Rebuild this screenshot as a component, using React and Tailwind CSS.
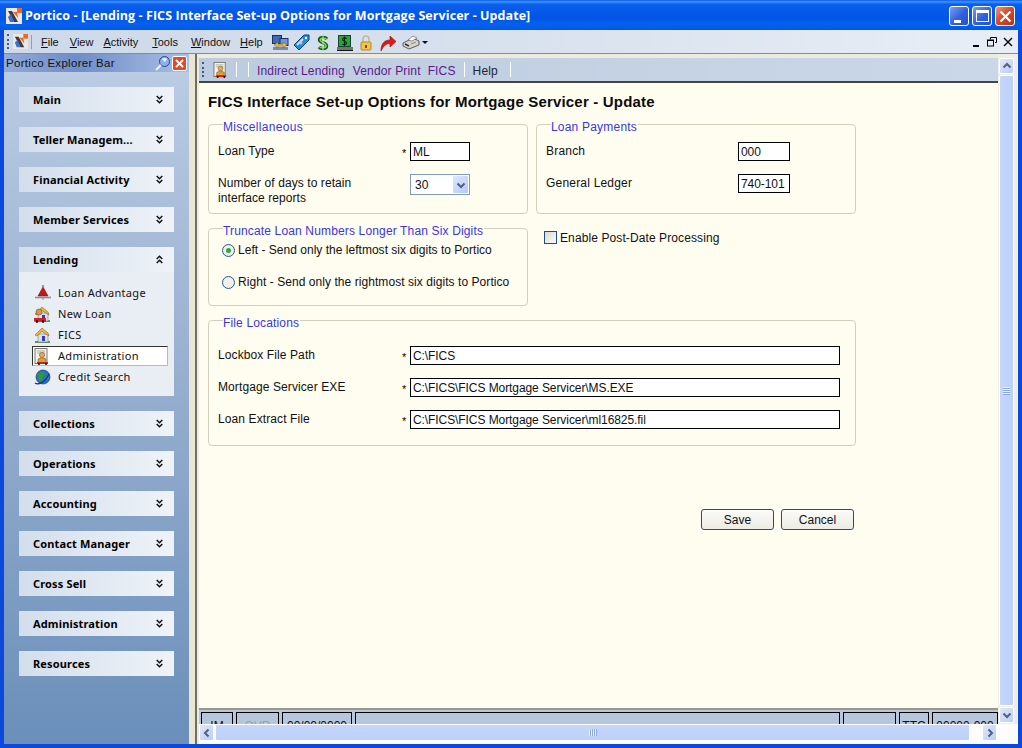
import React from "react";

const SANS = "font-['Liberation_Sans',Arial,sans-serif]";

function Chev({ up }) {
  return (
    <svg width="7" height="9" viewBox="0 0 7 9" fill="none" stroke="#111" strokeWidth="1.5" className="shrink-0 mr-[1px]">
      {up ? (
        <>
          <path d="M.7 4 L3.5 1.2 L6.3 4" />
          <path d="M.7 8 L3.5 5.2 L6.3 8" />
        </>
      ) : (
        <>
          <path d="M.7 1 L3.5 3.8 L6.3 1" />
          <path d="M.7 5 L3.5 7.8 L6.3 5" />
        </>
      )}
    </svg>
  );
}

function Logo({ s = 16 }) {
  return (
    <svg width={s} height={s} viewBox="0 0 16 16" className="shrink-0">
      <rect width="16" height="16" fill="#ece8e0" />
      <path d="M11 0h5v5h-5z" fill="#ee6a1f" />
      <path d="M2 3 L6 3 L12 14 L8 14 Z" fill="#3a3a48" />
      <path d="M2 9 L5 6 L8 14 L4 14 Z" fill="#3f6fc8" />
      <path d="M7 4 L11 4 L12 10 Z" fill="#e2682a" />
    </svg>
  );
}

function PcIcon() {
  return (
    <svg width="17" height="16" viewBox="0 0 17 16" className="shrink-0">
      <rect x="0.5" y="0.5" width="9" height="8" fill="#3e68b8" stroke="#1c2f66" />
      <rect x="8" y="3.5" width="8" height="7" fill="#6f97d8" stroke="#1c2f66" />
      <path d="M1 12h15v3H1z" fill="#7b8aa8" />
      <path d="M2 10 L6 7 L6 9 L11 9 L11 7 L15 10 L11 13 L11 11 L6 11 L6 13 Z" fill="#e8b83c" stroke="#7a5a10" strokeWidth=".5" />
    </svg>
  );
}
function TagIcon() {
  return (
    <svg width="17" height="17" viewBox="0 0 17 17" className="shrink-0">
      <path d="M1 11 L11 1 L16 1 L16 6 L6 16 Z" fill="#1f8fd8" stroke="#0c3f78" />
      <path d="M4 11 L10 5" stroke="#bfe6fa" strokeWidth="2" />
      <circle cx="13" cy="4" r="1.2" fill="#fff" />
      <circle cx="8" cy="9" r="1.5" fill="#f2a6c8" />
    </svg>
  );
}
function DollarIcon() {
  return (
    <svg width="12" height="16" viewBox="0 0 12 16" className="shrink-0">
      <path d="M10 4 C8 1.5 2.5 2 2.5 4.8 C2.5 8 9.5 7.4 9.5 11 C9.5 14 4 14.2 2 12" fill="none" stroke="#1a5a20" strokeWidth="3.4" />
      <path d="M9.5 4 C8 2.6 3.2 2.8 3.2 4.8 C3.2 7.6 9 7.4 9 11 C9 13 4.2 13.4 2.6 12" fill="none" stroke="#7ce04e" strokeWidth="1.4" />
      <path d="M6 0v16" stroke="#d8f4b0" strokeWidth=".8" />
    </svg>
  );
}
function ScreenIcon() {
  return (
    <svg width="16" height="16" viewBox="0 0 16 16" className="shrink-0">
      <rect x="1.5" y="0.5" width="12" height="11" fill="#2fa040" stroke="#143" />
      <path d="M0 12h16v3H0z" fill="#6a7a68" />
      <path d="M0 15.5h16" stroke="#111" />
      <path d="M9.5 3.5 C8.5 2.5 5.5 2.5 5.5 4.5 C5.5 6.5 9.5 6 9.5 8 C9.5 10 6.5 10 5.5 9 M7.5 1.5v9.5" fill="none" stroke="#08240c" strokeWidth="1.1" />
    </svg>
  );
}
function LockIcon() {
  return (
    <svg width="12" height="16" viewBox="0 0 12 16" className="shrink-0">
      <path d="M3 7V4 a3 3 0 0 1 6 0 V7" fill="none" stroke="#c8b890" strokeWidth="1.6" />
      <rect x="1" y="7" width="10" height="8" rx="1" fill="#f2c24a" stroke="#b08a30" />
      <rect x="5" y="10" width="2" height="3" fill="#7a5410" />
    </svg>
  );
}
function RedArrow() {
  return (
    <svg width="17" height="16" viewBox="0 0 17 16" className="shrink-0">
      <path d="M1 16 C1 8 5 5 10 5 L10 1 L16 6.5 L10 12 L10 8.5 C6 8.5 3.5 11 1 16 Z" fill="#dc1c14" stroke="#8a0c08" strokeWidth=".6" />
    </svg>
  );
}
function PrinterIcon() {
  return (
    <svg width="18" height="15" viewBox="0 0 18 15" className="shrink-0">
      <path d="M1 8 L11 3 L17 6 L17 10 L7 14 L1 11 Z" fill="#d4d4cc" stroke="#3c3c3c" strokeWidth=".8" />
      <path d="M6 5 L11 1 L15 3 L10 6 Z" fill="#fff" stroke="#555" strokeWidth=".6" />
      <path d="M3 9 L7 11" stroke="#333" strokeWidth="1.4" />
      <path d="M9 9 L14 7" stroke="#888" strokeWidth="1" />
    </svg>
  );
}
function TriIcon() {
  return (
    <svg width="16" height="16" viewBox="0 0 16 16">
      <path d="M8 0 L8 2" stroke="#8a2a20" />
      <path d="M8 2 L13 11 L3 11 Z" fill="#c8141a" stroke="#7c0e10" strokeWidth=".6" />
      <path d="M0 12.5 H16" stroke="#8c8c8c" strokeWidth="1.6" />
      <path d="M8 13 v2" stroke="#999" />
    </svg>
  );
}
function House({ car }) {
  return (
    <svg width="17" height="17" viewBox="0 0 17 17">
      <path d="M1 14 h15 v2 h-15z" fill="#5b9a4a" />
      <rect x="4" y="7" width="10" height="8" fill="#dcdcf0" stroke="#7878a0" strokeWidth=".6" />
      <path d="M1 8 L8 1 L14 6 L15 9 L8 4.5 L3 9 Z" fill="#e6b846" stroke="#8a6a1a" strokeWidth=".6" />
      <rect x="8" y="9" width="3" height="5" fill="#3c3ca8" />
      {car && <circle cx="5" cy="6" r="3" fill="#d89a48" stroke="#5a3a10" strokeWidth=".5" />}
      {car && <path d="M0 12 h12 v3.5 h-12 z" fill="#d81e1e" />}
      {car && <circle cx="3" cy="15.6" r="1.3" fill="#111" />}
      {car && <circle cx="9" cy="15.6" r="1.3" fill="#111" />}
    </svg>
  );
}
function DocPerson({ s = 17 }) {
  return (
    <svg width={s} height={s} viewBox="0 0 17 17" className="shrink-0">
      <rect x="1" y="0.5" width="12" height="15" fill="#f4f2e8" stroke="#7a7a70" />
      <path d="M3 3h8M3 5h8" stroke="#b0b0a8" />
      <circle cx="8" cy="7" r="2.6" fill="#e8a860" stroke="#704010" strokeWidth=".5" />
      <path d="M4 11 q4 -3 8 0 v4 h-8z" fill="#d8a03c" stroke="#6a4a14" strokeWidth=".5" />
      <path d="M3 14 h11 v2 h-11z" fill="#cc2020" />
      <circle cx="5" cy="16" r="1" fill="#111" />
      <circle cx="12" cy="16" r="1" fill="#111" />
    </svg>
  );
}
function Globe() {
  return (
    <svg width="17" height="17" viewBox="0 0 17 17">
      <circle cx="9" cy="8" r="7" fill="#2a6fd0" stroke="#123a80" strokeWidth=".7" />
      <path d="M4 5 q3 -3 6 -2 l1 3 -3 2 1 3 -3 2 -2 -4z" fill="#2f9a3c" />
      <path d="M12 7 l3 1 -2 4z" fill="#2f9a3c" />
      <path d="M1 14 C4 16 11 14 15 5" fill="none" stroke="#123a80" strokeWidth="1.3" />
    </svg>
  );
}

function SideGroup({ title, open, children }) {
  return (
    <div className="w-[155px] mb-[15px]">
      <div className="h-[25px] flex items-center justify-between pl-[14px] pr-[10px] bg-[linear-gradient(90deg,#d3deec,#eff3f8)]">
        <span className="text-[11px] leading-[16px] tracking-[0.15px] font-bold text-black font-['Noto_Sans','DejaVu_Sans',sans-serif] whitespace-nowrap">{title}</span>
        <Chev up={open} />
      </div>
      {children}
    </div>
  );
}

function SideItem({ icon, label, active }) {
  return (
    <div
      className={`h-[20px] mb-[1px] flex items-center gap-[7px] w-[136px] -ml-[2px] pl-[1px] ${
        active ? "bg-white border border-t-[#333] border-l-[#333] border-r-[#a8bcd8] border-b-[#a8bcd8]" : "border border-transparent"
      }`}
    >
      <span className="w-[17px] h-[17px] flex items-center justify-center shrink-0">{icon}</span>
      <span className="text-[11px] tracking-[0.3px] text-[#111] font-['Noto_Sans','DejaVu_Sans',sans-serif] whitespace-nowrap">{label}</span>
    </div>
  );
}

function Card({ legend, tracking, className = "", children }) {
  return (
    <div className={`relative border border-[#d2d0bd] rounded-[4px] ${className}`}>
      <span className={`absolute left-[14px] -top-[5px] bg-[#fffcf0] pr-[1px] text-[12px] leading-[14px] text-[#3838dc] whitespace-nowrap ${tracking}`}>
        {legend}
      </span>
      {children}
    </div>
  );
}

function TextBox({ value, w, star }) {
  return (
    <div className="flex items-center">
      {star && <span className="w-[8px] text-[11px] leading-[12px] pt-[2px] text-black">*</span>}
      <div style={{ width: w }} className="h-[19px] border border-black bg-white text-[12px] leading-[19px] tracking-[-0.08px] pl-[2px] text-[#111] overflow-hidden whitespace-nowrap">
        {value}
      </div>
    </div>
  );
}

function Radio({ on, label, tracking }) {
  return (
    <div className="flex items-center gap-[3px] h-[16px]">
      <span className="w-[13px] h-[13px] rounded-full border border-[#2c5a84] bg-[#f0f0ea] flex items-center justify-center shrink-0">
        {on && <span className="w-[5px] h-[5px] rounded-full bg-[#2fa83c]" />}
      </span>
      <span className={`text-[12px] text-[#111] whitespace-nowrap ${tracking}`}>{label}</span>
    </div>
  );
}

function XpBtn({ children, red }) {
  return (
    <div
      className={`w-[20px] h-[20px] rounded-[3px] border border-white flex items-center justify-center ${
        red
          ? "bg-[linear-gradient(135deg,#eb9a78,#d84a2a_45%,#bd3110)]"
          : "bg-[linear-gradient(135deg,#7b9df0,#2f5fe0_55%,#2350cf)]"
      }`}
    >
      {children}
    </div>
  );
}

function ArrowBtn({ dir, className = "" }) {
  const paths = {
    up: "M1.5 6.5 L5 3 L8.5 6.5",
    down: "M1.5 3.5 L5 7 L8.5 3.5",
    left: "M6.5 1.5 L3 5 L6.5 8.5",
    right: "M3.5 1.5 L7 5 L3.5 8.5",
  };
  return (
    <div className={`flex items-center justify-center rounded-[2px] border border-white bg-[linear-gradient(135deg,#dfe7fb,#bccdf6)] shrink-0 ${className}`}>
      <svg width="10" height="10" viewBox="0 0 10 10" fill="none" stroke="#4d6185" strokeWidth="2">
        <path d={paths[dir]} />
      </svg>
    </div>
  );
}

const MENU = [
  ["F", "ile", "mr-[11px]"],
  ["V", "iew", "mr-[10px]"],
  ["A", "ctivity", "mr-[14px]"],
  ["T", "ools", "mr-[13px]"],
  ["W", "indow", "mr-[10px]"],
  ["H", "elp", "mr-[9px]"],
];

function StatusCell({ w, grow, text, gray }) {
  return (
    <div
      style={w ? { width: w } : undefined}
      className={`h-[12px] border border-black border-b-0 shrink-0 text-center text-[12px] leading-[26px] overflow-hidden whitespace-nowrap ${grow ? "flex-1" : ""} ${gray ? "text-[#9aa0a8]" : "text-[#111]"}`}
    >
      {text}
    </div>
  );
}

export default function App() {
  return (
    <div className={`w-[1022px] h-[748px] overflow-hidden flex flex-col bg-[#0a49dc] ${SANS}`}>
      {/* Title bar */}
      <div className="h-[30px] shrink-0 flex items-center pt-[2px] pl-[6px] pr-[7px] bg-[linear-gradient(180deg,#0a5be0_0%,#3d94f8_6%,#0a5fec_14%,#0254e6_60%,#0461ee_78%,#0358e6_100%)]">
        <Logo />
        <span className="ml-[3px] mt-[1px] text-white font-bold text-[12.5px] tracking-[0.07px] whitespace-nowrap font-['Open_Sans',sans-serif] flex-1">
          Portico - [Lending - FICS Interface Set-up Options for Mortgage Servicer - Update]
        </span>
        <div className="flex gap-[3px]">
          <XpBtn>
            <span className="w-[7px] h-[3px] bg-white mt-[10px] -ml-[4px]" />
          </XpBtn>
          <XpBtn>
            <span className="w-[13px] h-[12px] border border-white border-t-[3px]" />
          </XpBtn>
          <XpBtn red>
            <svg width="13" height="13" viewBox="0 0 13 13" stroke="#fff" strokeWidth="2.2">
              <path d="M1.5 1.5 L11.5 11.5 M11.5 1.5 L1.5 11.5" />
            </svg>
          </XpBtn>
        </div>
      </div>

      <div className="flex-1 min-h-0 mx-[4px] mb-[4px] flex flex-col">
        {/* Menu bar */}
        <div className="h-[24px] shrink-0 flex items-center bg-[linear-gradient(90deg,#cdd9e9,#d8e1ee_50%,#e8eef6)] text-[11px] text-[#111] pl-[3px] pr-[5px] border-b border-b-[#8f8c7c]">
          <span className="w-[2px] h-[15px] border-l-2 border-dotted border-[#3d5a86] mr-[4px]" />
          <Logo s={15} />
          <span className="w-px h-[14px] bg-[#8ca0bc] mx-[3px]" />
          <div className="flex items-center ml-[6px] mt-[2px]">
            {MENU.map(([a, b, m]) => (
              <span key={b} className={`${m} whitespace-nowrap`}>
                <span className="underline">{a}</span>
                {b}
              </span>
            ))}
          </div>
          <div className="flex items-center mt-[2px]">
            <PcIcon />
            <span className="ml-[4px]"><TagIcon /></span>
            <span className="ml-[7px]"><DollarIcon /></span>
            <span className="ml-[8px]"><ScreenIcon /></span>
            <span className="ml-[7px]"><LockIcon /></span>
            <span className="ml-[8px]"><RedArrow /></span>
            <span className="ml-[5px]"><PrinterIcon /></span>
            <span className="w-0 h-0 border-x-[3px] border-x-transparent border-t-[3px] border-t-[#111] ml-[2px]" />
          </div>
          <div className="flex-1" />
          <div className="flex items-center gap-[6px]">
            <svg width="10" height="10" viewBox="0 0 10 10"><path d="M2 8h6v2H2z" fill="#000" /></svg>
            <svg width="10" height="10" viewBox="0 0 10 10" fill="none" stroke="#000"><path d="M3.5 2.5V.5h6v5H8" /><rect x=".5" y="3" width="6" height="6" /><path d="M1 3.5h5" /></svg>
            <svg width="10" height="10" viewBox="0 0 10 10" stroke="#000" strokeWidth="1.4"><path d="M1 1 L9 9 M9 1 L1 9" /></svg>
          </div>
        </div>

        <div className="flex-1 min-h-0 flex">
          {/* Explorer bar */}
          <div className="w-[185px] shrink-0 flex flex-col bg-[linear-gradient(180deg,#bccde4_0%,#9db3d2_40%,#6a8fba_100%)]">
            <div className="h-[18px] shrink-0 flex items-center pl-[2px] pr-[2px] bg-[linear-gradient(90deg,#94a9d6,#6f8dc8_40%,#a9bfe4)] text-[11.5px] text-[#111]">
              <span className="flex-1 mt-[1px] tracking-[0.3px] whitespace-nowrap">Portico Explorer Bar</span>
              <svg width="15" height="15" viewBox="0 0 15 15" className="mr-[2px]">
                <circle cx="9.5" cy="5.5" r="5" fill="#8fb0ea" stroke="#24489c" />
                <path d="M7 3 q3 -2 5 0 l-2 3z" fill="#eef5ff" />
                <path d="M1 14 L6 9" stroke="#eef5ff" strokeWidth="1.8" />
              </svg>
              <span className="w-[15px] h-[15px] rounded-[2px] border border-white bg-[#dd4a2c] flex items-center justify-center">
                <svg width="9" height="9" viewBox="0 0 9 9" stroke="#fff" strokeWidth="2"><path d="M1 1 L8 8 M8 1 L1 8" /></svg>
              </span>
            </div>
            <div className="pt-[15px] pl-[15px]">
              <SideGroup title="Main" />
              <SideGroup title="Teller Managem..." />
              <SideGroup title="Financial Activity" />
              <SideGroup title="Member Services" />
              <SideGroup title="Lending" open>
                <div className="h-[124px] bg-[#e9eef4] pt-[11px] pl-[15px]">
                  <SideItem icon={<TriIcon />} label="Loan Advantage" />
                  <SideItem icon={<House car />} label="New Loan" />
                  <SideItem icon={<House />} label="FICS" />
                  <SideItem icon={<DocPerson />} label="Administration" active />
                  <SideItem icon={<Globe />} label="Credit Search" />
                </div>
              </SideGroup>
              <SideGroup title="Collections" />
              <SideGroup title="Operations" />
              <SideGroup title="Accounting" />
              <SideGroup title="Contact Manager" />
              <SideGroup title="Cross Sell" />
              <SideGroup title="Administration" />
              <SideGroup title="Resources" />
            </div>
          </div>

          {/* Splitter */}
          <div className="w-[6px] shrink-0 bg-[#e9e6d4]" />
          <div className="w-[2px] shrink-0 bg-[#716f64]" />

          {/* MDI client */}
          <div className="flex-1 min-w-0 flex flex-col bg-[#ecebdd]">
            <div className="flex-1 min-h-0 flex">
              <div className="flex-1 min-w-0 flex flex-col">
                {/* Inner toolbar */}
                <div className="h-[4px] shrink-0 bg-[#ecebdd]" />
                <div className="h-[25px] shrink-0 flex items-center ml-[2px] pl-[3px] bg-[linear-gradient(90deg,#bccbdf,#c6d3e5_60%,#cad7e8)] border-b-2 border-b-[#444] text-[12px] tracking-[0.15px]">
                  <span className="w-[2px] h-[15px] border-l-2 border-dotted border-[#3d5a86] mr-[9px]" />
                  <DocPerson s={16} />
                  <span className="w-px h-[15px] bg-[#fff] ml-[7px] mr-[11px]" />
                  <span className="w-px h-[15px] bg-[#fff] mr-[8px]" />
                  <span className="mt-[2px] text-[#5a1a88] whitespace-nowrap">Indirect Lending</span>
                  <span className="mt-[2px] text-[#5a1a88] whitespace-nowrap ml-[8px]">Vendor Print</span>
                  <span className="mt-[2px] text-[#5a1a88] whitespace-nowrap ml-[7px]">FICS</span>
                  <span className="w-px h-[15px] bg-[#fff] ml-[8px] mr-[8px]" />
                  <span className="mt-[2px] text-[#223] whitespace-nowrap">Help</span>
                  <span className="w-px h-[15px] bg-[#fff] ml-[12px]" />
                </div>
                {/* Form */}
                <div className="flex-1 min-h-0 ml-[2px] bg-[#fffcf0] border-b-2 border-b-[#9b9889] pl-[9px] pt-[11px] text-[#111] overflow-hidden">
                  <h1 className="text-[15px] leading-[16px] font-bold text-[#0c0c0c] whitespace-nowrap tracking-[0.18px] mb-[14px]">
                    FICS Interface Set-up Options for Mortgage Servicer - Update
                  </h1>
                  <div className="grid grid-cols-[320px_320px] gap-x-[8px] w-[648px]">
                    <Card legend="Miscellaneous" tracking="tracking-[0.3px]" className="h-[90px] text-[12px] tracking-[0.08px]">
                      <div className="grid grid-cols-[192px_60px] pl-[9px] pt-[17px]">
                        <div className="leading-[16px] mt-[1px]">Loan Type</div>
                        <div className="-ml-[8px]"><TextBox star value="ML" w={60} /></div>
                        <div className="leading-[15px] mt-[15px] w-[150px]">Number of days to retain interface reports</div>
                        <div className="mt-[13px] w-[60px] h-[21px] border border-[#7f9db9] bg-white flex items-center pl-[4px] pr-[1px] justify-between">
                          <span>30</span>
                          <span className="w-[15px] h-[17px] rounded-[1px] bg-[linear-gradient(135deg,#dfe7fb,#b6c9f5)] flex items-center justify-center">
                            <svg width="10" height="10" viewBox="0 0 10 10" fill="none" stroke="#4d6185" strokeWidth="2"><path d="M1.5 3.5 L5 7 L8.5 3.5" /></svg>
                          </span>
                        </div>
                      </div>
                    </Card>
                    <Card legend="Loan Payments" tracking="tracking-[0.2px]" className="h-[90px] text-[12px] tracking-[0.2px]">
                      <div className="grid grid-cols-[192px_52px] gap-y-[13px] pl-[9px] pt-[17px]">
                        <div className="leading-[16px] mt-[1px]">Branch</div>
                        <TextBox value="000" w={52} />
                        <div className="leading-[16px] mt-[1px]">General Ledger</div>
                        <TextBox value="740-101" w={52} />
                      </div>
                    </Card>
                    <Card legend="Truncate Loan Numbers Longer Than Six Digits" tracking="tracking-[0.15px]" className="h-[78px] mt-[14px]">
                      <div className="pl-[13px] pt-[13px] flex flex-col gap-[16px]">
                        <Radio on tracking="tracking-[0.02px]" label="Left - Send only the leftmost six digits to Portico" />
                        <Radio tracking="tracking-[0.06px]" label="Right - Send only the rightmost six digits to Portico" />
                      </div>
                    </Card>
                    <div className="mt-[14px] pl-[8px] pt-[2px] flex items-start gap-[3px] text-[12px] tracking-[0.1px]">
                      <span className="w-[13px] h-[13px] mt-[1px] border border-[#1c5180] bg-[linear-gradient(135deg,#dcdcd4,#fbfbf8)] shrink-0" />
                      <span className="leading-[16px] whitespace-nowrap">Enable Post-Date Processing</span>
                    </div>
                  </div>
                  <Card legend="File Locations" tracking="tracking-[0.15px]" className="w-[648px] h-[126px] mt-[14px] text-[12px] tracking-[0.1px]">
                    <div className="grid grid-cols-[184px_438px] gap-y-[13px] pl-[9px] pt-[25px]">
                      <div className="leading-[16px] mt-[1px]">Lockbox File Path</div>
                      <TextBox star value="C:\FICS" w={430} />
                      <div className="leading-[16px] mt-[1px]">Mortgage Servicer EXE</div>
                      <TextBox star value="C:\FICS\FICS Mortgage Servicer\MS.EXE" w={430} />
                      <div className="leading-[16px] mt-[1px]">Loan Extract File</div>
                      <TextBox star value="C:\FICS\FICS Mortgage Servicer\ml16825.fil" w={430} />
                    </div>
                  </Card>
                  <div className="w-[646px] flex justify-end gap-[7px] mt-[63px] text-[12px]">
                    <button className="w-[73px] h-[21px] rounded-[3px] border border-[#1c5180] bg-[linear-gradient(180deg,#fbfbf8,#ecebe4)] text-[#111]">Save</button>
                    <button className="w-[73px] h-[21px] rounded-[3px] border border-[#1c5180] bg-[linear-gradient(180deg,#fbfbf8,#ecebe4)] text-[#111]">Cancel</button>
                  </div>
                </div>
                {/* Status strip, clipped by the scroll bar below */}
                <div className="h-[14px] shrink-0 ml-[2px] pl-[2px] flex gap-[3px] items-end bg-[#b6c7dd] overflow-hidden">
                  <StatusCell w={32} text="IM" />
                  <StatusCell w={43} text="OVR" gray />
                  <StatusCell w={70} text="00/00/0000" />
                  <StatusCell grow />
                  <StatusCell w={53} />
                  <StatusCell w={30} text="TTC" />
                  <StatusCell w={66} text="00000-000" />
                </div>
              </div>
              {/* Vertical scroll bar */}
              <div className="w-[20px] shrink-0 pl-[1px] pr-[4px] pt-[4px] pb-[1px] flex flex-col bg-[#f1efe2]">
                <ArrowBtn dir="up" className="h-[16px]" />
                <div className="flex-1 my-[1px] rounded-[2px] border border-white bg-[linear-gradient(90deg,#c6d6fb,#bcd0fa)] flex items-center justify-center">
                  <span className="w-[7px] h-[8px] bg-[repeating-linear-gradient(180deg,#eef3fe_0_1px,#8ca8e0_1px_2px)]" />
                </div>
                <ArrowBtn dir="down" className="h-[16px]" />
              </div>
            </div>
            {/* Horizontal scroll bar */}
            <div className="h-[20px] shrink-0 ml-[2px] pr-[4px] pb-[3px] flex items-stretch bg-[#fdfdfb]">
              <ArrowBtn dir="left" className="w-[15px]" />
              <div className="w-[755px] ml-[1px] rounded-[2px] border border-white bg-[linear-gradient(180deg,#c6d6fb,#bcd0fa)] flex items-center justify-center">
                <span className="w-[8px] h-[7px] bg-[repeating-linear-gradient(90deg,#eef3fe_0_1px,#8ca8e0_1px_2px)]" />
              </div>
              <div className="w-[12px]" />
              <ArrowBtn dir="right" className="w-[15px]" />
            </div>
          </div>
        </div>
      </div>
    </div>
  );
}
